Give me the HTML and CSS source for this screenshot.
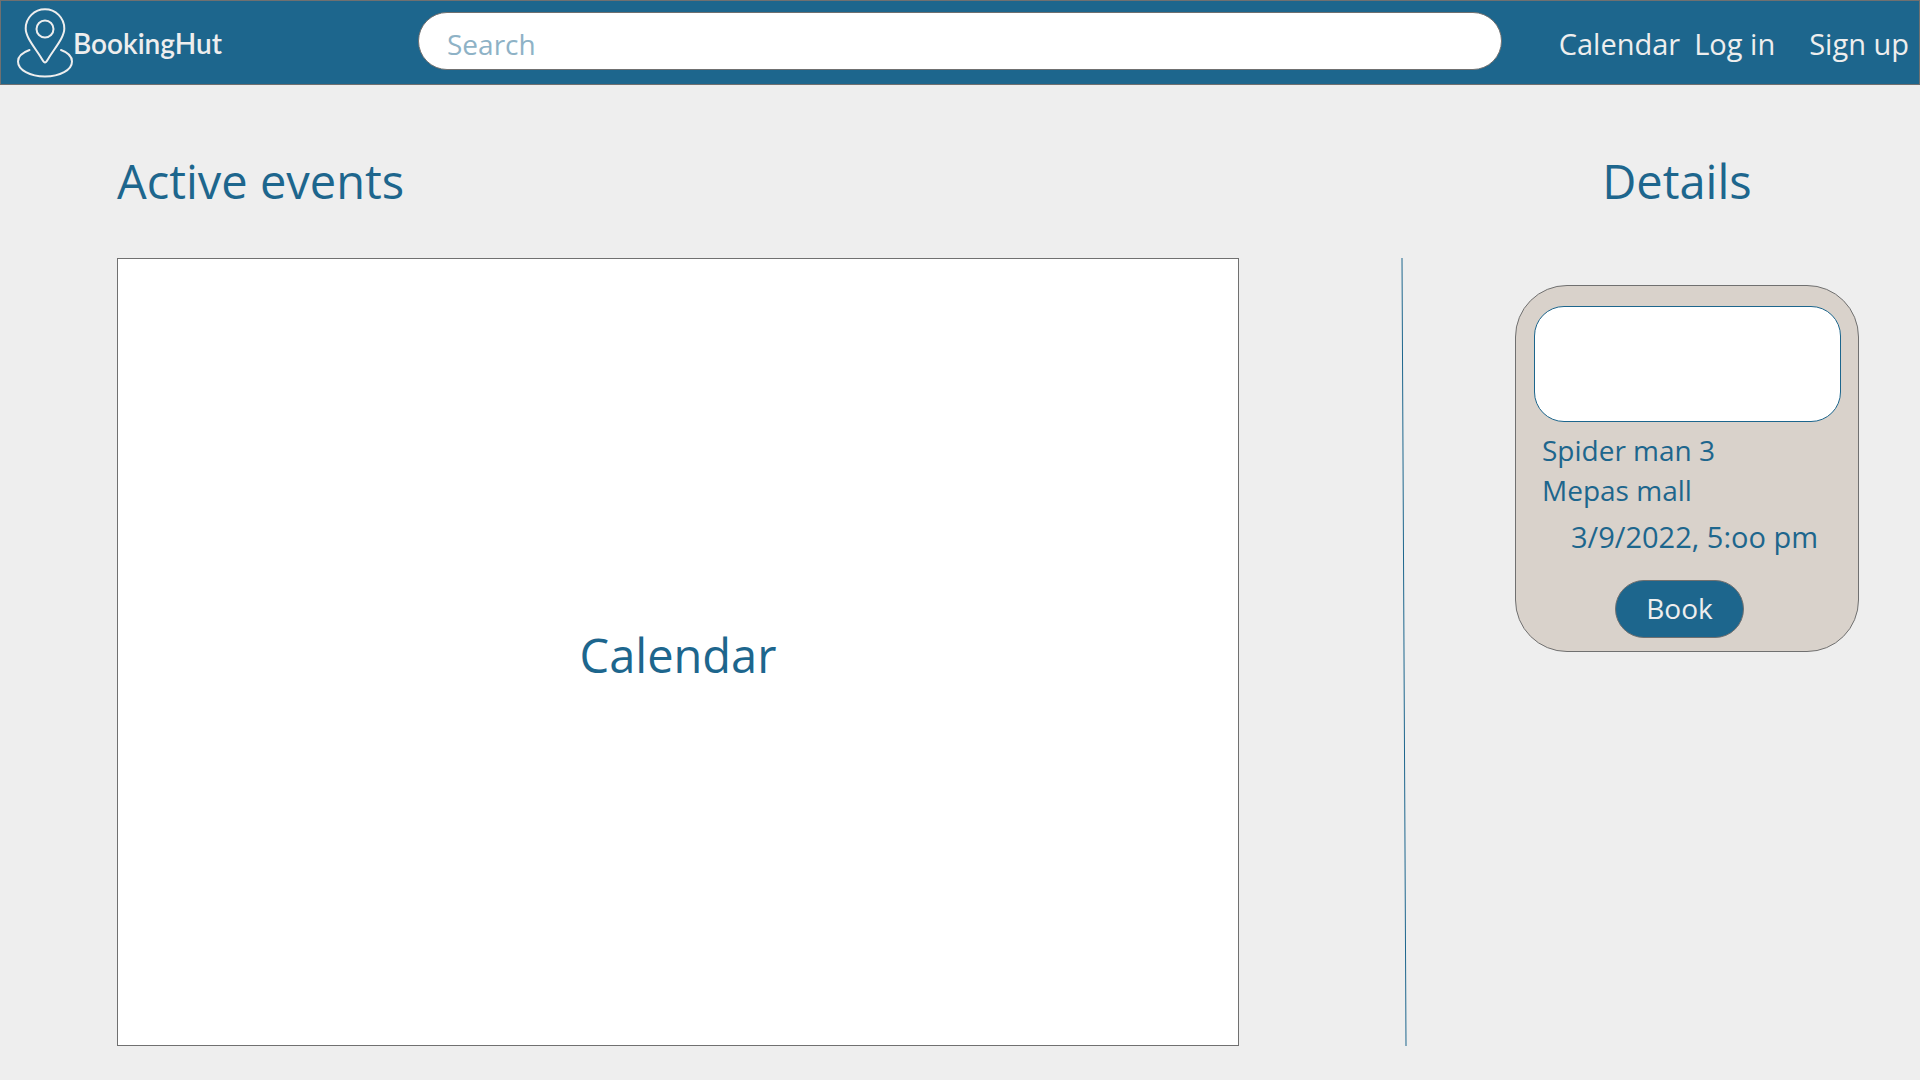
FILE: index.html
```html
<!DOCTYPE html>
<html lang="en">
<head>
  <meta charset="utf-8">
  <meta name="viewport" content="width=device-width, initial-scale=1">
  <title>BookingHut</title>
  <link rel="stylesheet" href="styles.css">
</head>
<body>
  <header class="topbar">
    <a class="brand" href="#">
      <svg class="brand-icon" viewBox="0 0 56 70" aria-hidden="true">
        <path d="M28 54.500C26.500 54.500 25.500 52 24 49.500C17 38.500 8.700 29 8.700 20.500A19.300 19.300 0 0 1 47.300 20.500C47.300 29 39 38.500 32 49.500C30.500 52 29.500 54.500 28 54.500Z"/>
        <circle cx="28" cy="21" r="8.500"/>
        <path d="M12.500 42C5.500 44.500 1 48.500 1 53.500C1 62 13 68.500 28 68.500S55 62 55 53.500C55 48.500 51 44.500 44 42"/>
      </svg>
      <span class="brand-name">BookingHut</span>
    </a>
    <form class="search" role="search">
      <input class="search-input" type="search" placeholder="Search" aria-label="Search">
    </form>
    <nav class="nav">
      <a href="#">Calendar</a>
      <a href="#">Log in</a>
      <a class="nav-signup" href="#">Sign up</a>
    </nav>
  </header>

  <main class="page">
    <section class="events">
      <h1 class="title">Active events</h1>
      <div class="calendar">Calendar</div>
    </section>
    <svg class="divider" viewBox="0 0 6 788" preserveAspectRatio="none" aria-hidden="true">
      <path d="M1 0L5 788"/>
    </svg>
    <aside class="details">
      <h2 class="title details-title">Details</h2>
      <article class="card">
        <div class="card-image"></div>
        <div class="card-text">
          <p>Spider man 3</p>
          <p>Mepas mall</p>
          <p class="card-date">3/9/2022, 5:oo pm</p>
        </div>
        <button class="book" type="button">Book</button>
      </article>
    </aside>
  </main>
</body>
</html>
```

FILE: styles.css
```css
:root {
  --blue: #1d668d;
  --paper: #eeeeee;
  --line: #707070;
  --sand: #d9d2cb;
}

* {
  box-sizing: border-box;
}

body {
  display: flex;
  flex-direction: column;
  min-height: 100vh;
  margin: 0;
  background: var(--paper);
  color: var(--blue);
  font: 28px/40px "Segoe UI", "Open Sans", "Noto Sans", sans-serif;
}

h1, h2, p {
  margin: 0;
  font-weight: 400;
}

.topbar {
  display: grid;
  grid-template-columns: 401px 1fr auto;
  align-items: center;
  padding: 0 10px 0 16px;
  border: 1px solid var(--line);
  background: var(--blue);
}

.brand {
  display: flex;
  align-items: center;
  color: var(--paper);
  font: 600 28px/40px Lato, sans-serif;
  text-decoration: none;
}

.brand-icon {
  width: 56px;
  height: 70px;
  fill: none;
  stroke: var(--paper);
  stroke-width: 2;
  stroke-linecap: round;
}

.search {
  display: flex;
  padding: 11px 0 14px;
}

.search-input {
  width: 100%;
  height: 58px;
  padding: 6px 28px 0;
  border: 1px solid var(--line);
  border-radius: 29px;
  background: #fff;
  color: var(--blue);
  font: inherit;
  appearance: none;
}

.search-input::placeholder {
  color: #8eb2c6;
  opacity: 1;
}

.nav {
  display: flex;
  gap: 14px;
  padding: 2px 0 0 57px;
  font-size: 29px;
}

.nav a {
  color: var(--paper);
  text-decoration: none;
}

.nav .nav-signup {
  margin-left: 20px;
}

.page {
  display: grid;
  flex: 1;
  grid-template-columns: 1fr 6px 452px;
  padding: 64px 61px 34px 117px;
}

.title {
  margin-bottom: 45px;
  font-size: 47px;
  line-height: 64px;
}

.events {
  display: flex;
  flex-direction: column;
  margin-right: 162px;
}

.calendar {
  display: flex;
  flex: 1;
  align-items: center;
  justify-content: center;
  min-height: 400px;
  padding-top: 6px;
  border: 1px solid var(--line);
  background: #fff;
  font-size: 47px;
  line-height: 64px;
}

.divider {
  width: 6px;
  height: calc(100% - 109px);
  margin-top: 109px;
  stroke: var(--blue);
}

.details {
  justify-self: end;
  width: 344px;
}

.details-title {
  margin-bottom: 72px;
  padding-right: 20px;
  text-align: center;
}

.card {
  display: flex;
  flex-direction: column;
  padding: 20px 17px 13px 18px;
  border: 1px solid var(--line);
  border-radius: 52px;
  background: var(--sand);
}

.card-image {
  height: 116px;
  border: 1px solid var(--blue);
  border-radius: 30px;
  background: #fff;
}

.card-text {
  padding: 8px 8px 23px;
}

.card-date {
  padding: 7px 0 0 29px;
  font-size: 29px;
  white-space: nowrap;
}

.book {
  align-self: center;
  width: 129px;
  height: 58px;
  margin-right: 16px;
  padding: 0 0 2px;
  border: 1px solid var(--line);
  border-radius: 29px;
  background: var(--blue);
  color: var(--paper);
  font: inherit;
}
```
